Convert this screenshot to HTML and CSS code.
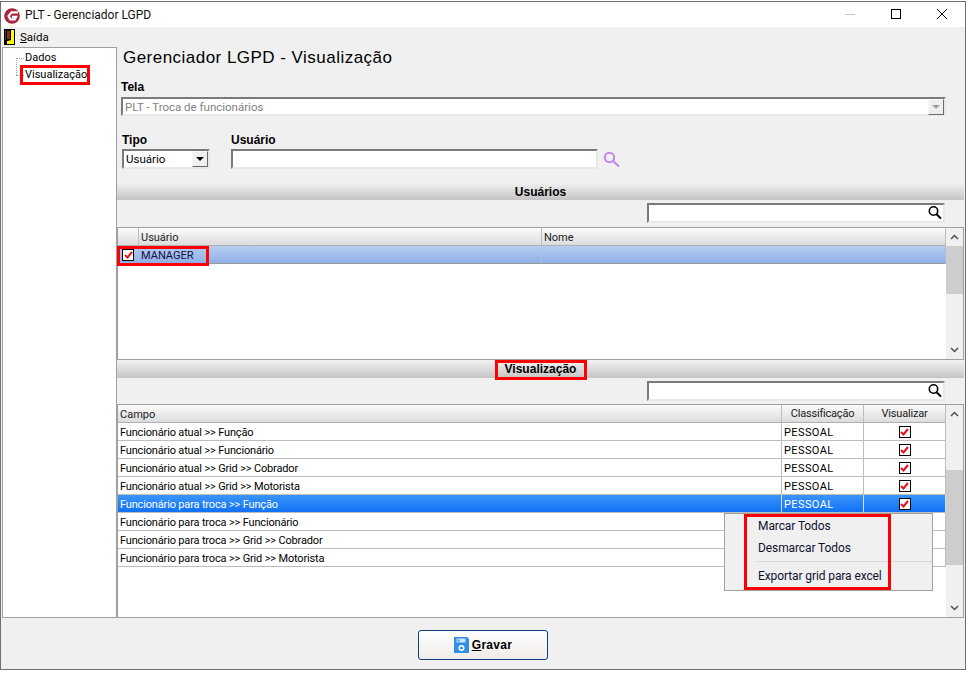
FILE: index.html
```html
<!DOCTYPE html>
<html lang="pt-BR">
<head>
<meta charset="utf-8">
<title>PLT - Gerenciador LGPD</title>
<link rel="stylesheet" href="styles.css">
</head>
<body>
<div class="window">
  <header class="titlebar">
    <svg class="logo" viewBox="0 0 16 16" width="16" height="16"><circle cx="8" cy="8" r="7.800" fill="#a9263f"/><path d="M14 4.300H7.500L4.600 8l1.800 3.400h4.300l1.300-2.500H8" fill="none" stroke="#fff" stroke-width="2.300"/></svg>
    <span class="title-text">PLT - Gerenciador LGPD</span>
    <div class="win-controls">
      <svg width="10" height="10" viewBox="0 0 10 10"><path d="M0 5.500h10" stroke="#c4c4c4"/></svg>
      <svg width="10" height="10" viewBox="0 0 10 10"><rect x=".5" y=".5" width="9" height="9" fill="none" stroke="#000"/></svg>
      <svg width="10" height="10" viewBox="0 0 10 10"><path d="M0 0l10 10M10 0L0 10" stroke="#000"/></svg>
    </div>
  </header>
  <nav class="menubar">
    <svg class="door" width="11" height="16" viewBox="0 0 11 16"><rect width="11" height="16" fill="#000"/><path d="M7 1h3v14H3v-3h1l3-1z" fill="#ff0"/><path d="M3 2h3v8H3z" fill="#8a2a20"/><path d="M1 1h1v10H1z" fill="#3a3a3a"/></svg>
    <span class="menu-item"><u>S</u>aída</span>
  </nav>
  <div class="content">
    <aside class="tree">
      <div class="tree-item">Dados</div>
      <div class="tree-item">Visualização</div>
    </aside>
    <main class="main">
      <h1 class="heading">Gerenciador LGPD - Visualização</h1>
      <div class="form-area">
        <label class="label">Tela</label>
        <div class="field field-disabled">
          <span>PLT - Troca de funcionários</span>
          <span class="combo-btn combo-btn-disabled"><i class="arrow"></i></span>
        </div>
        <div class="form-row">
          <div class="tipo-col">
            <label class="label">Tipo</label>
            <div class="field">
              <span>Usuário</span>
              <span class="combo-btn"><i class="arrow arrow-dark"></i></span>
            </div>
          </div>
          <div class="usuario-col">
            <label class="label">Usuário</label>
            <div class="field"></div>
          </div>
          <svg class="lookup" width="18" height="18" viewBox="0 0 18 18"><circle cx="6.500" cy="6.500" r="4.700" fill="none" stroke="#c583ee" stroke-width="2"/><path d="M10.200 10.200l5.800 5.300" stroke="#c583ee" stroke-width="2"/></svg>
        </div>
      </div>

      <div class="section-title section-first">Usuários</div>
      <div class="search-row">
        <div class="search-box">
          <svg width="16" height="16" viewBox="0 0 16 16"><circle cx="6.500" cy="6" r="4.200" fill="none" stroke="#000" stroke-width="1.600"/><path d="M9.600 9.200l4.400 4.400" stroke="#000" stroke-width="2"/></svg>
        </div>
      </div>
      <section class="grid grid-users">
        <div class="grid-body">
          <div class="row head users-cols"><div></div><div>Usuário</div><div>Nome</div></div>
          <div class="row users-cols row-soft">
            <div class="cell-center"><span class="check"><svg width="9" height="8" viewBox="0 0 9 8"><path d="M1 4l2.500 2.500L8 1" fill="none" stroke="#e8101c" stroke-width="2"/></svg></span></div>
            <div>MANAGER</div><div></div>
          </div>
        </div>
        <div class="scrollbar">
          <svg class="chev" width="9" height="6" viewBox="0 0 9 6"><path d="M1 5l3.500-3.500L8 5" fill="none" stroke="#505050" stroke-width="1.500"/></svg>
          <div class="track"><div class="thumb thumb-users"></div></div>
          <svg class="chev" width="9" height="6" viewBox="0 0 9 6"><path d="M1 1l3.500 3.500L8 1" fill="none" stroke="#505050" stroke-width="1.500"/></svg>
        </div>
      </section>

      <div class="section-title section-second">Visualização</div>
      <div class="search-row search-row-second">
        <div class="search-box">
          <svg width="16" height="16" viewBox="0 0 16 16"><circle cx="6.500" cy="6" r="4.200" fill="none" stroke="#000" stroke-width="1.600"/><path d="M9.600 9.200l4.400 4.400" stroke="#000" stroke-width="2"/></svg>
        </div>
      </div>
      <section class="grid grid-fields">
        <div class="grid-body">
          <div class="row head fields-cols"><div>Campo</div><div class="cell-center">Classificação</div><div class="cell-center">Visualizar</div></div>
          <div class="row fields-cols line"><div class="campo">Funcionário atual &gt;&gt; Função</div><div class="classif">PESSOAL</div><div class="cell-center"><span class="check"><svg width="9" height="8" viewBox="0 0 9 8"><path d="M1 4l2.500 2.500L8 1" fill="none" stroke="#e8101c" stroke-width="2"/></svg></span></div></div>
          <div class="row fields-cols line"><div class="campo">Funcionário atual &gt;&gt; Funcionário</div><div class="classif">PESSOAL</div><div class="cell-center"><span class="check"><svg width="9" height="8" viewBox="0 0 9 8"><path d="M1 4l2.500 2.500L8 1" fill="none" stroke="#e8101c" stroke-width="2"/></svg></span></div></div>
          <div class="row fields-cols line"><div class="campo">Funcionário atual &gt;&gt; Grid &gt;&gt; Cobrador</div><div class="classif">PESSOAL</div><div class="cell-center"><span class="check"><svg width="9" height="8" viewBox="0 0 9 8"><path d="M1 4l2.500 2.500L8 1" fill="none" stroke="#e8101c" stroke-width="2"/></svg></span></div></div>
          <div class="row fields-cols line"><div class="campo">Funcionário atual &gt;&gt; Grid &gt;&gt; Motorista</div><div class="classif">PESSOAL</div><div class="cell-center"><span class="check"><svg width="9" height="8" viewBox="0 0 9 8"><path d="M1 4l2.500 2.500L8 1" fill="none" stroke="#e8101c" stroke-width="2"/></svg></span></div></div>
          <div class="row fields-cols line row-selected"><div class="campo">Funcionário para troca &gt;&gt; Função</div><div class="classif">PESSOAL</div><div class="cell-center"><span class="check"><svg width="9" height="8" viewBox="0 0 9 8"><path d="M1 4l2.500 2.500L8 1" fill="none" stroke="#e8101c" stroke-width="2"/></svg></span></div></div>
          <div class="row fields-cols line"><div class="campo">Funcionário para troca &gt;&gt; Funcionário</div><div></div><div></div></div>
          <div class="row fields-cols line"><div class="campo">Funcionário para troca &gt;&gt; Grid &gt;&gt; Cobrador</div><div></div><div></div></div>
          <div class="row fields-cols line"><div class="campo">Funcionário para troca &gt;&gt; Grid &gt;&gt; Motorista</div><div></div><div></div></div>
        </div>
        <div class="scrollbar">
          <svg class="chev" width="9" height="6" viewBox="0 0 9 6"><path d="M1 5l3.500-3.500L8 5" fill="none" stroke="#505050" stroke-width="1.500"/></svg>
          <div class="track"><div class="thumb thumb-fields"></div></div>
          <svg class="chev" width="9" height="6" viewBox="0 0 9 6"><path d="M1 1l3.500 3.500L8 1" fill="none" stroke="#505050" stroke-width="1.500"/></svg>
        </div>
      </section>
    </main>
  </div>
  <footer class="footer">
    <button class="save-btn" type="button">
      <svg width="15" height="16" viewBox="0 0 15 16"><path d="M0 0h13l2 2v14H0z" fill="#2f8fe6"/><rect x="2.500" y="1.500" width="9" height="4" fill="#cfe4f7"/><rect x="3.500" y="2.500" width="2" height="2" fill="#2f8fe6"/><circle cx="7.500" cy="11" r="2.300" fill="none" stroke="#fff" stroke-width="1.500"/></svg>
      <span><u>G</u>ravar</span>
    </button>
  </footer>

  <div class="context-menu">
    <div class="menu-line">Marcar Todos</div>
    <div class="menu-line">Desmarcar Todos</div>
    <div class="menu-sep"></div>
    <div class="menu-line">Exportar grid para excel</div>
  </div>
  <div class="mark mark-tree"></div>
  <div class="mark mark-manager"></div>
  <div class="mark mark-section"></div>
  <div class="mark mark-menu"></div>
</div>
</body>
</html>
```
FILE: styles.css
```css
* { box-sizing: border-box; }
html, body { margin: 0; padding: 0; background: #fff; }
body { width: 968px; height: 674px; overflow: hidden; font: 11px/16px Roboto, "Liberation Sans", Arial, sans-serif; color: #000; }

.window { position: relative; width: 966px; height: 669px; margin-top: 1px; border: 1px solid #6f6f6f; background: #f0f0f0; display: flex; flex-direction: column; }

.titlebar { height: 25px; background: #fff; display: flex; align-items: center; padding: 3px 0 0 3px; flex: none; }
.logo { flex: none; }
.title-text { margin: 0 0 2px 5px; font-size: 12px; color: #101010; }
.win-controls { margin-left: auto; display: flex; align-items: center; gap: 36px; padding: 0 18px 5px 0; }
.win-controls svg { display: block; }

.menubar { height: 20px; display: flex; align-items: center; padding-left: 3px; flex: none; font-size: 11.500px; }
.menu-item { margin-left: 5px; }
.door { flex: none; }

.content { height: 571px; display: flex; flex: none; }

.tree { width: 115px; margin-left: 1px; background: #fff; border: 1px solid #a0a0a0; padding: 2px 0 0 22px; flex: none; }
.tree-item { position: relative; height: 17px; line-height: 16px; }
.tree-item::before { content: ""; position: absolute; left: -9px; top: 8px; width: 8px; border-top: 1px dotted #a0a0a0; }
.tree-item::after { content: ""; position: absolute; left: -9px; top: 8px; height: 17px; border-left: 1px dotted #a0a0a0; }
.tree-item:last-child::after { display: none; }

.main { width: 848px; flex: none; display: flex; flex-direction: column; }
.heading { margin: 0; padding: 0 0 0 6px; height: 29px; flex: none; font: 400 17px/22px "Liberation Sans", Arial, sans-serif; letter-spacing: .47px; }

.form-area { padding: 2px 0 0 4px; height: 107px; flex: none; }
.label { display: block; height: 19px; font: 700 12px/18px "Liberation Sans", Arial, sans-serif; }
.field { height: 19px; background: #fff; border: 2px solid; border-color: #7a7a7a #e8e8e8 #e8e8e8 #7a7a7a; display: flex; align-items: center; padding-left: 2px; position: relative; font-size: 11.500px; }
.field-disabled { width: 825px; color: #7f7f7f; }
.combo-btn { position: absolute; right: 0; top: 0; width: 16px; height: 16px; background: #f0f0f0; border: 1px solid; border-color: #f8f8f8 #6a6a6a #6a6a6a #f8f8f8; display: flex; align-items: center; justify-content: center; }
.combo-btn-disabled { background: #eee; }
.arrow { width: 0; height: 0; border-left: 4px solid transparent; border-right: 4px solid transparent; border-top: 4px solid #a0a0a0; }
.arrow-dark { border-top-color: #000; }

.form-row { display: flex; align-items: flex-start; margin-top: 15px; }
.form-row .label { height: 18px; }
.form-row .field { height: 20px; }
.tipo-col { width: 88px; margin-left: 1px; }
.usuario-col { width: 367px; margin-left: 21px; }
.lookup { margin: 20px 0 0 5px; flex: none; }

.section-title { height: 17px; margin-right: 1px; text-align: center; font: 700 12px/17px "Liberation Sans", Arial, sans-serif; background: linear-gradient(#f0f0f0 0, #c4c4c4 100%); flex: none; }
.section-first { line-height: 18px; }
.section-second { margin-top: 1px; line-height: 16px; }

.search-row { height: 27px; padding: 3px 0 0 530px; flex: none; }
.search-row-second { height: 26px; }
.search-box { width: 298px; height: 20px; background: #fff; border: 2px solid; border-color: #7a7a7a #e8e8e8 #e8e8e8 #7a7a7a; display: flex; align-items: center; justify-content: flex-end; }

.grid { margin-right: 1px; display: flex; background: #fff; border: 1px solid #a0a0a0; flex: none; }
.grid-users { height: 133px; }
.grid-fields { height: 214px; }
.grid-body { width: 828px; flex: none; }

.row { display: grid; height: 18px; line-height: 19px; }
.users-cols { grid-template-columns: 21px 403px 404px; }
.fields-cols { grid-template-columns: 664px 82px 82px; }
.row > div { padding-left: 2px; overflow: hidden; white-space: nowrap; border-right: 1px solid #bdbdbd; border-bottom: 1px solid #bdbdbd; }
.head > div { background: linear-gradient(#fbfbfb, #dcdcdc); color: #202020; border-bottom: 1px solid #b0b0b0; }
.head .cell-center { letter-spacing: -.2px; }
.campo { letter-spacing: -.16px; }
.classif { letter-spacing: .4px; }
.cell-center { display: flex; align-items: center; justify-content: center; padding-left: 0 !important; }
.row-soft { background: linear-gradient(#b7cdf0, #8eaee6); color: #101040; }
.row-soft > div { border-right-color: #a8bde0; border-bottom-color: #9a9a9a; }
.row-selected { background: linear-gradient(#3b95f8, #0d6ff5); color: #fff; }
.row-selected > div { border-right-color: #cfe0ff; }

.check { width: 12px; height: 12px; border: 1px solid #000; background: #fff; display: flex; align-items: center; justify-content: center; }

.scrollbar { flex: 1; display: flex; flex-direction: column; background: #f0f0f0; align-items: center; }
.chev { flex: none; margin: 6px 0; }
.track { flex: 1; width: 100%; }
.thumb { background: #cdcdcd; width: 100%; }
.thumb-users { height: 48px; }
.thumb-fields { height: 95px; margin-top: 47px; }

.footer { flex: 1; display: flex; justify-content: center; align-items: flex-start; padding-top: 12px; }
.save-btn { width: 130px; height: 30px; border: 1px solid #0b3f78; border-radius: 3px; background: linear-gradient(#fff, #f0ece8); display: flex; align-items: center; justify-content: center; gap: 3px; font: 700 12px/16px "Liberation Sans", Arial, sans-serif; padding: 0; letter-spacing: .3px; }

.context-menu { position: absolute; left: 723px; top: 511px; width: 209px; height: 78px; background: #f0f0f0; border: 1px solid #a0a0a0; padding: 2px 0 0 33px; font-size: 12px; letter-spacing: -.1px; }
.menu-line { height: 22px; line-height: 20px; color: #101030; }
.menu-sep { height: 1px; background: #d8d8d8; margin: 1px 8px 4px -1px; width: 175px; }

.mark { position: absolute; border: 3px solid #f00; pointer-events: none; }
.mark-tree { left: 19px; top: 63px; width: 70px; height: 20px; }
.mark-manager { left: 116px; top: 244px; width: 92px; height: 20px; }
.mark-section { left: 494px; top: 358px; width: 92px; height: 20px; }
.mark-menu { left: 743px; top: 512px; width: 147px; height: 76px; }
```
